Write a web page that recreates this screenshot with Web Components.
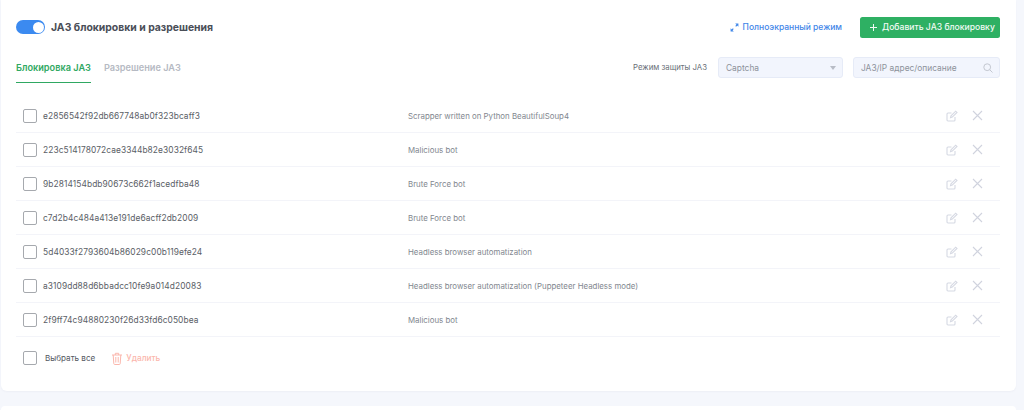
<!DOCTYPE html>
<html><head><meta charset="utf-8">
<style>
html,body{margin:0;height:410px;overflow:hidden;background:#f5f7fc;font-family:Inter,"Noto Sans",sans-serif;}
body{padding:0 8px 0 1px;box-sizing:border-box;display:flex;flex-direction:column;gap:15px}
</style></head><body>
<template id="t-check"><style>:host{display:block;width:12px;height:12px;border:1px solid #a6a9ae;border-radius:2px;background:#fff;flex:none}</style></template>

<template id="t-row"><style>
:host{display:flex;align-items:center;height:33px;border-bottom:1px solid #f3f4f9;padding-left:7px}
.h{margin-left:6px;width:365px;font-size:8.400px;color:#5a5e66;letter-spacing:.01em;white-space:nowrap}
.d{flex:1;font-size:7.860px;color:#82878f;white-space:nowrap}
svg{flex:none;display:block}
.e{margin-right:14px}.x{margin-right:17px}
</style>
<x-check></x-check><span class="h"><slot name="h"></slot></span><span class="d"><slot name="d"></slot></span>
<svg class="e" width="12" height="12" viewBox="0 0 12 12" fill="none" stroke="#d6d9e3" stroke-width="1.1"><path d="M9 7v3a1 1 0 0 1-1 1H2a1 1 0 0 1-1-1V4a1 1 0 0 1 1-1h3.500"/><path d="M4.500 7.600 5 5.800 9.700 1.200 11 2.400 6.300 7.100z"/></svg>
<svg class="x" width="11" height="11" viewBox="0 0 11 11" fill="none" stroke="#d0d3de" stroke-width="1.1"><path d="M1 1l9 9M10 1l-9 9"/></svg>
</template>

<template id="t-card"><style>
:host{display:block;height:391px;flex:none;background:#fff;border-radius:0 0 6px 6px;box-sizing:border-box;padding:16px 16px 0 15px;box-shadow:0 1px 2px rgba(40,50,90,.04)}
.top{display:flex;align-items:center;height:22px}
.toggle{width:29px;height:14px;border-radius:7px;background:#3b8af0;position:relative;flex:none}
.toggle i{position:absolute;right:1.500px;top:1.500px;width:11px;height:11px;border-radius:50%;background:#fff}
h1{margin:0 0 0 6px;font-size:10.400px;font-weight:700;color:#4a4e57;flex:1;white-space:nowrap}
.fs{display:flex;align-items:center;gap:4px;color:#3f86e8;font-size:8.500px;font-weight:500;margin-right:18px}
.add{width:140px;height:21px;background:#2eb063;border-radius:2.500px;color:#f1faf4;font-size:8.600px;font-weight:500;display:flex;align-items:center;padding-left:10px;box-sizing:border-box;gap:5px}
.bar{display:flex;align-items:flex-start;height:42px;margin-top:19px}
.tab{font-size:9.200px;font-weight:600;height:26px;line-height:21px;box-sizing:border-box;white-space:nowrap}
.on{color:#2fa862;border-bottom:1px solid #2fa862;width:75px}
.off{color:#b6bac3;margin-left:13px;flex:1}
.lbl{font-size:7.800px;color:#6a6f78;line-height:21px;margin-right:11px;white-space:nowrap}
.inp{height:21px;box-sizing:border-box;background:#f2f5fd;border:1px solid #e6ebf7;border-radius:3px;display:flex;align-items:center;padding:0 6px 0 7px;font-size:8.400px;color:#8d929b;justify-content:space-between;white-space:nowrap}
.sel{width:125px;margin-right:10px}
.sea{width:147px}
.tri{width:0;height:0;border:3.500px solid transparent;border-top:4.500px solid #b8bcc6;border-bottom:0;margin-right:0}
.foot{display:flex;align-items:center;height:42px;padding-left:7px}
.all{font-size:8.100px;color:#53575f;margin-left:8px}
.del{display:flex;align-items:center;gap:3px;margin-left:16px;color:#fbb7ad;font-size:8.300px;font-weight:500}
svg{display:block;flex:none}
</style>
<div class="top">
<div class="toggle"><i></i></div><h1>JA3 блокировки и разрешения</h1>
<div class="fs"><svg width="9" height="9" viewBox="0 0 9 9"><path d="M5.200.6h3.200v3.200zM.6 5.200v3.200h3.200z" fill="#3f86e8"/><path d="M2 7 3.300 5.700M5.700 3.300 7 2" stroke="#3f86e8" stroke-width="1.100" fill="none"/></svg>Полноэкранный режим</div>
<div class="add"><svg width="7" height="7" viewBox="0 0 7 7" stroke="#f1faf4" stroke-width="1"><path d="M3.500 0v7M0 3.500h7"/></svg>Добавить JA3 блокировку</div>
</div>
<div class="bar">
<div class="tab on">Блокировка JA3</div><div class="tab off">Разрешение JA3</div>
<div class="lbl">Режим защиты JA3</div>
<div class="inp sel">Captcha<span class="tri"></span></div>
<div class="inp sea">JA3/IP адрес/описание<svg width="10" height="10" viewBox="0 0 10 10" fill="none" stroke="#c3c7d0" stroke-width="1"><circle cx="4.200" cy="4.200" r="3.400"/><path d="M6.700 6.700 9.500 9.500"/></svg></div>
</div>
<slot></slot>
<div class="foot"><x-check></x-check><span class="all">Выбрать все</span>
<span class="del"><svg width="12" height="13" viewBox="0 0 12 13" fill="none" stroke="#fbb7ad" stroke-width="1"><path d="M1 3h10M4.300 3V1.300h3.400V3M2.200 3l.6 8.700a1 1 0 0 0 1 .8h4.400a1 1 0 0 0 1-.8L9.800 3M4.800 5v5.500M7.200 5v5.500"/></svg>Удалить</span></div>
</template>

<template id="t-next"><style>:host{display:block;flex:1;background:#fff;border-radius:6px 6px 0 0}</style></template>

<x-card>
<x-row><span slot="h">e2856542f92db667748ab0f323bcaff3</span><span slot="d">Scrapper written on Python BeautifulSoup4</span></x-row>
<x-row><span slot="h">223c514178072cae3344b82e3032f645</span><span slot="d">Malicious bot</span></x-row>
<x-row><span slot="h">9b2814154bdb90673c662f1acedfba48</span><span slot="d">Brute Force bot</span></x-row>
<x-row><span slot="h">c7d2b4c484a413e191de6acff2db2009</span><span slot="d">Brute Force bot</span></x-row>
<x-row><span slot="h">5d4033f2793604b86029c00b119efe24</span><span slot="d">Headless browser automatization</span></x-row>
<x-row><span slot="h">a3109dd88d6bbadcc10fe9a014d20083</span><span slot="d">Headless browser automatization (Puppeteer Headless mode)</span></x-row>
<x-row><span slot="h">2f9ff74c94880230f26d33fd6c050bea</span><span slot="d">Malicious bot</span></x-row>
</x-card>
<x-next></x-next>
<script>
for(const [n,t] of [['x-check','t-check'],['x-row','t-row'],['x-card','t-card'],['x-next','t-next']]){
customElements.define(n,class extends HTMLElement{constructor(){super();this.attachShadow({mode:'open'}).appendChild(document.getElementById(t).content.cloneNode(true));}});
}
</script>
</body></html>
